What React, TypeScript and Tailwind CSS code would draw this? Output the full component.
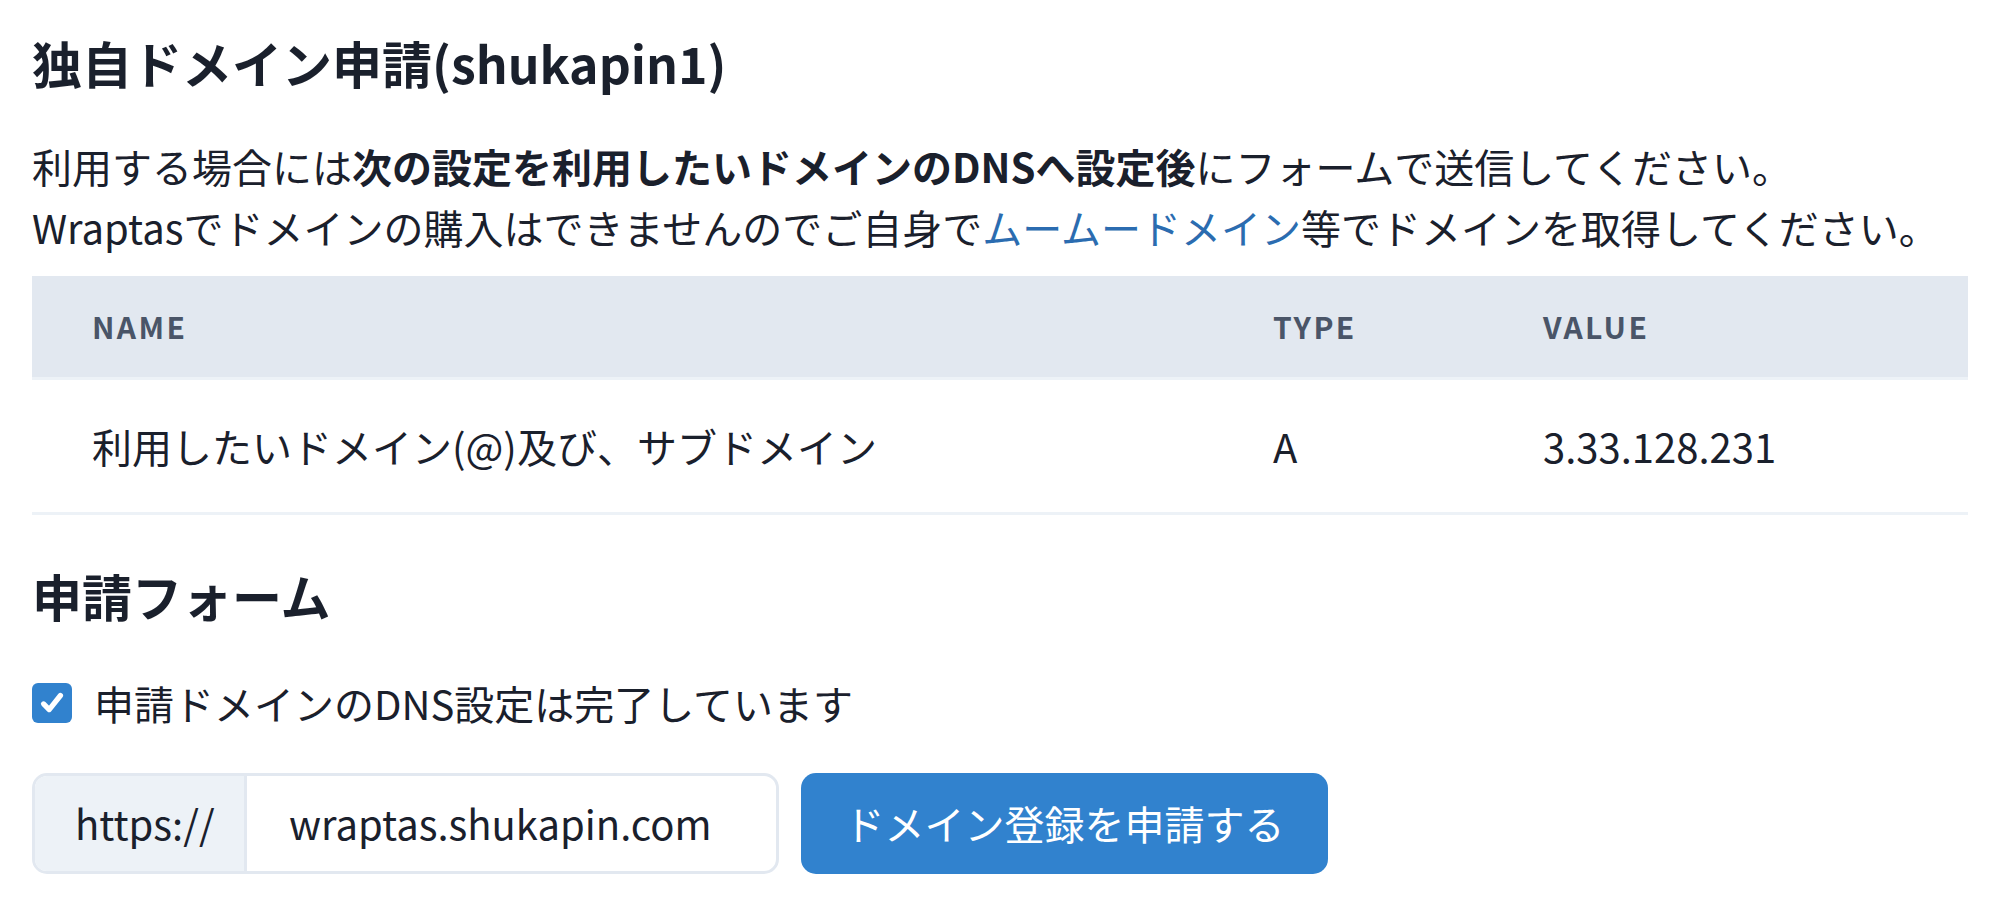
import React from "react";

export default function App() {
  return (
    <div
      className="w-[2000px] h-[914px] bg-white text-[#1A202C] px-[32px] pt-[32px]"
      style={{ fontFamily: '"Noto Sans CJK JP", "Noto Sans", sans-serif' }}
    >
      <h1 className="text-[50px] leading-[60px] font-bold">独自ドメイン申請(shukapin1)</h1>
      <div className="mt-[44px] text-[40px] leading-[61px]">
        <p>
          利用する場合には<span className="font-bold">次の設定を利用したいドメインのDNSへ設定後</span>にフォームで送信してください。
        </p>
        <p>
          Wraptasでドメインの購入はできませんのでご自身で<a className="text-[#2B6CB0]">ムームードメイン</a>等でドメインを取得してください。
        </p>
      </div>
      <table className="mt-[18px] w-[1936px] border-collapse">
        <thead>
          <tr className="bg-[#E2E8F0] h-[102px] border-b-[3px] border-[#EDF2F7]">
            <th className="w-[1181px] pl-[60px] text-left text-[30px] font-bold tracking-[0.08em] text-[#4A5568]">NAME</th>
            <th className="w-[270px] pl-[60px] text-left text-[30px] font-bold tracking-[0.08em] text-[#4A5568]">TYPE</th>
            <th className="pl-[60px] text-left text-[30px] font-bold tracking-[0.08em] text-[#4A5568]">VALUE</th>
          </tr>
        </thead>
        <tbody>
          <tr className="h-[135px] border-b-[3px] border-[#EDF2F7] text-[40px]">
            <td className="pl-[60px]">利用したいドメイン(@)及び、サブドメイン</td>
            <td className="pl-[60px]">A</td>
            <td className="pl-[60px]">3.33.128.231</td>
          </tr>
        </tbody>
      </table>
      <h2 className="mt-[50px] text-[50px] leading-[60px] font-bold">申請フォーム</h2>
      <label className="mt-[48px] flex items-center gap-[22px] text-[40px] leading-[60px]">
        <span className="w-[40px] h-[40px] rounded-[6px] bg-[#3182CE] flex items-center justify-center">
          <svg viewBox="0 0 16 16" className="w-[30px] h-[30px]" fill="none" stroke="white" strokeWidth="2.8" strokeLinecap="round" strokeLinejoin="round">
            <path d="M3.5 8.5 L6.5 11.5 L12.5 4" />
          </svg>
        </span>
        申請ドメインのDNS設定は完了しています
      </label>
      <div className="mt-[40px] flex items-center gap-[22px]">
        <div className="flex h-[101px] w-[747px] rounded-[15px] border-[3px] border-[#E2E8F0] overflow-hidden">
          <div className="w-[212px] bg-[#EDF2F7] border-r-[3px] border-[#E2E8F0] flex items-center pl-[40px] text-[40px]">https://</div>
          <div className="flex-1 flex items-center pl-[42px] text-[40px]">wraptas.shukapin.com</div>
        </div>
        <button className="h-[101px] w-[527px] rounded-[15px] bg-[#3182CE] text-white text-[40px] flex items-center justify-center">
          ドメイン登録を申請する
        </button>
      </div>
    </div>
  );
}
